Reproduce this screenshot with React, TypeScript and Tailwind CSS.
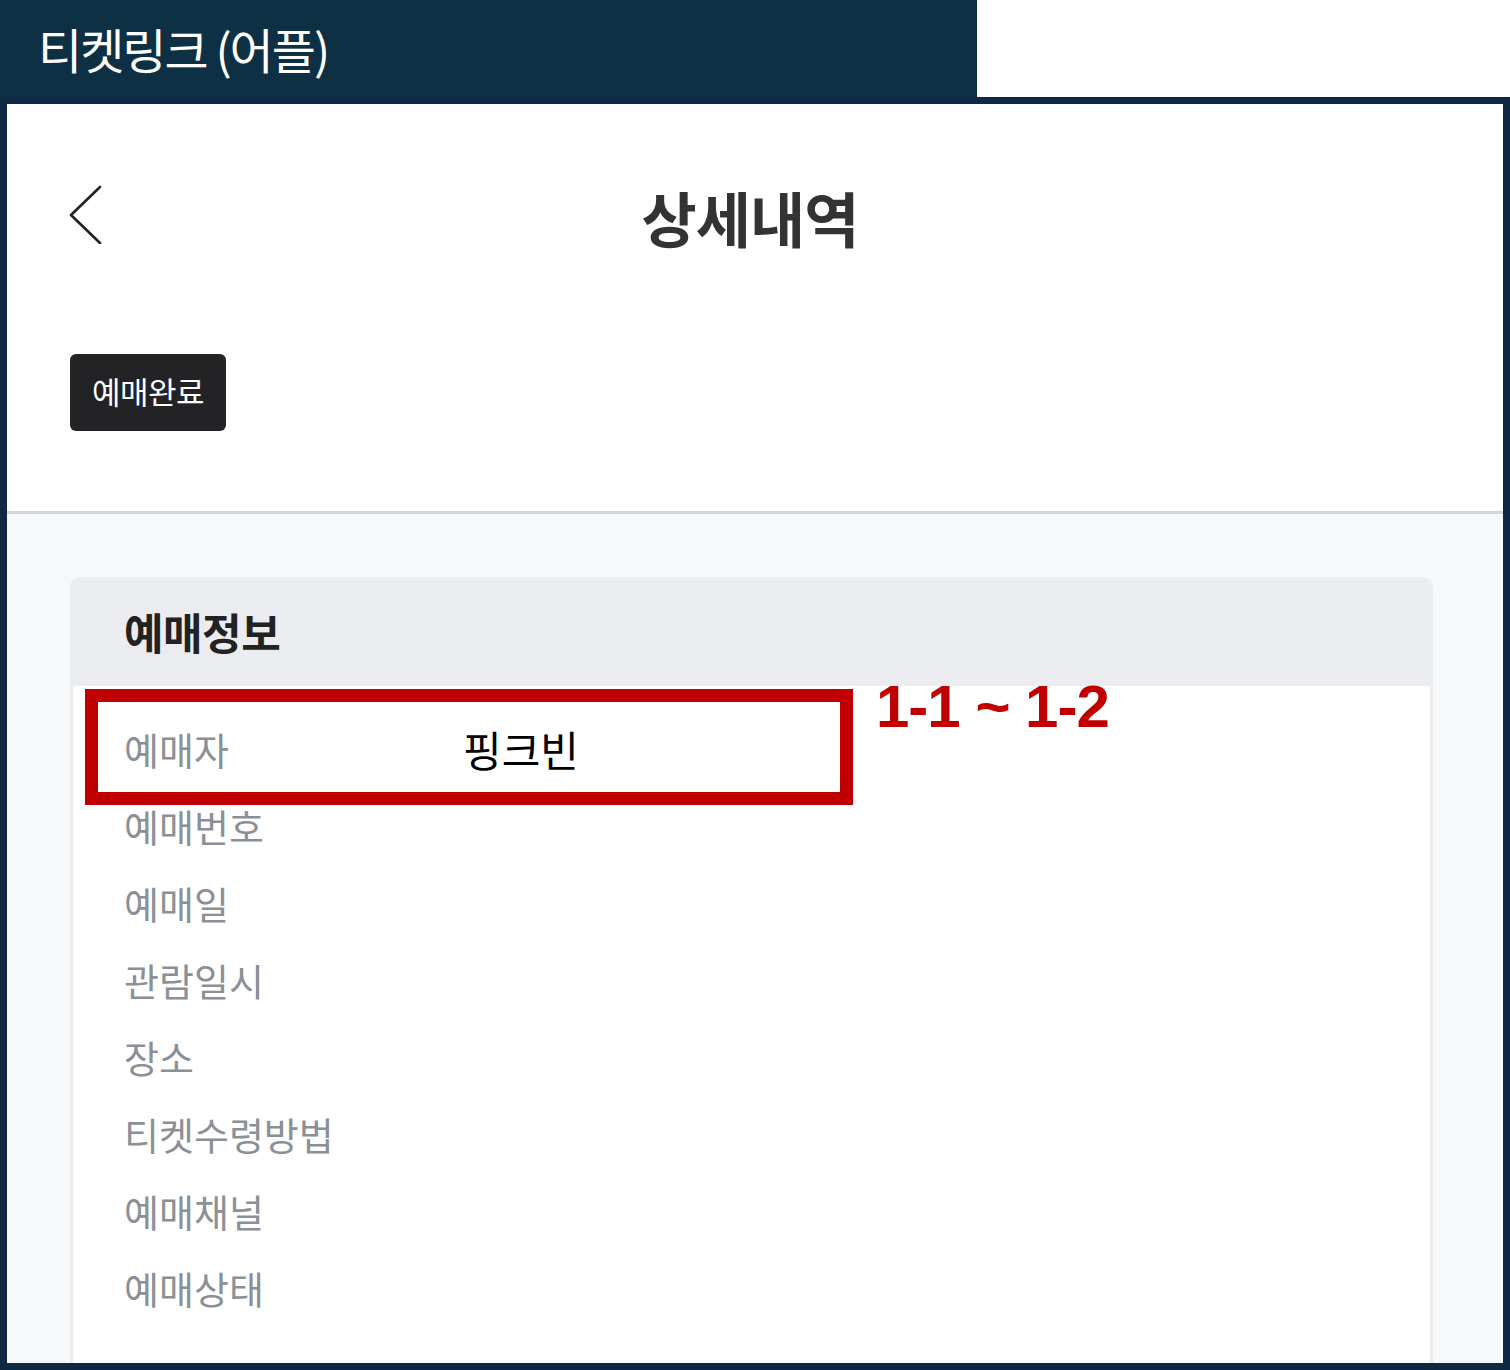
const kr = { fontFamily: '"Noto Sans CJK KR", "Noto Sans", sans-serif' }

const rows = ['예매자', '예매번호', '예매일', '관람일시', '장소', '티켓수령방법', '예매채널', '예매상태']

export default function App() {
  return (
    <div className="relative w-[1510px] h-[1370px] bg-white overflow-hidden" style={kr}>
      {/* 상단 탭 */}
      <div className="h-[97px] flex">
        <div className="w-[977px] bg-[#0d3044] flex items-center pl-[38px] pb-[2px]">
          <span className="text-[48px] text-white tracking-[-2px] leading-none">티켓링크 (어플)</span>
        </div>
      </div>

      {/* 화면 프레임 */}
      <div className="h-[1273px] border-[7px] border-[#0f2944] flex flex-col overflow-hidden">
        <div className="h-[407px] bg-white px-[63px] pt-[53px] shrink-0">
          <div className="h-[120px] grid grid-cols-[1fr_auto_1fr] items-center">
            <svg width="36" height="60" viewBox="0 0 36 60" className="ml-[-1px] mt-[-6px]">
              <polyline points="31,3 2,31 31,59" fill="none" stroke="#222" strokeWidth="2.6" strokeLinecap="round" strokeLinejoin="round" />
            </svg>
            <h1 className="text-[60px] font-semibold text-[#333] leading-none mr-[10px] tracking-[-1px]">상세내역</h1>
            <div />
          </div>
          <div className="mt-[77px] w-[156px] h-[77px] rounded-[6px] bg-[#232326] flex items-center justify-center">
            <span className="text-[31px] text-white tracking-[-0.5px] mb-[2px]">예매완료</span>
          </div>
        </div>
        <div className="h-[3px] bg-[#d2d5db] shrink-0" />
        <div className="flex-1 bg-[#f7f8fa] pl-[63px] pr-[70px] pt-[63px]">
          <div className="h-full rounded-t-[10px] border-x-[3px] border-[#ebecf0] bg-white overflow-hidden">
            <div className="h-[109px] bg-[#ebecf0] flex items-center pl-[51px]">
              <h2 className="text-[43px] font-bold text-[#222] tracking-[-0.5px]">예매정보</h2>
            </div>
            <div className="pt-[24px] pl-[51px]">
              {rows.map((r, i) => (
                <div key={r} className="h-[77px] flex items-center">
                  <span className="w-[339px] text-[38px] text-[#8b9097]">{r}</span>
                  {i === 0 && <span className="text-[42px] text-black">핑크빈</span>}
                </div>
              ))}
            </div>
          </div>
        </div>
      </div>

      {/* 주석 표시 */}
      <div className="absolute left-[85px] top-[689px] w-[768px] h-[116px] border-[13px] border-[#c00000]" />
      <div
        className="absolute left-[876px] top-[677px] text-[60px] font-bold text-[#c00000] leading-none tracking-[-1px]"
        style={{ fontFamily: '"Liberation Sans", Arial, sans-serif' }}
      >
        1-1 ~ 1-2
      </div>
    </div>
  )
}
